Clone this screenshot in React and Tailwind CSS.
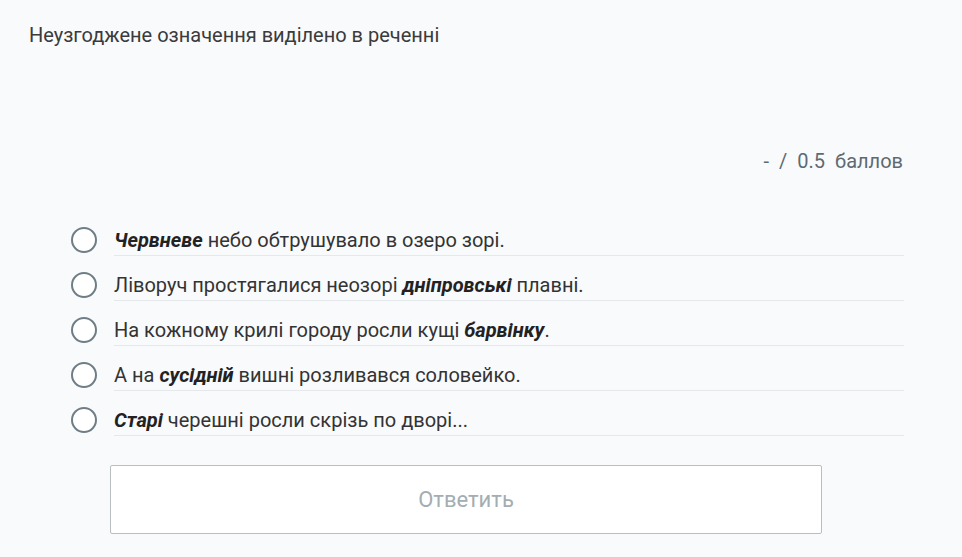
const options = [
    [{ b: "Червневе" }, " небо обтрушувало в озеро зорі."],
    ["Ліворуч простягалися неозорі ", { b: "дніпровські" }, " плавні."],
    ["На кожному крилі городу росли кущі ", { b: "барвінку" }, "."],
    ["А на ", { b: "сусідній" }, " вишні розливався соловейко."],
    [{ b: "Старі" }, " черешні росли скрізь по дворі..."],
];

function Radio() {
    return (
        <span className="mt-[16px] w-[26px] h-[26px] shrink-0 rounded-full border-[2.5px] border-[#6f7e86] bg-white"></span>
    );
}

export default function App() {
    return (
        <div
            className="w-[962px] h-[557px] bg-[#f9fafc] text-[#333] overflow-hidden"
            style={{ fontFamily: "Roboto, 'Noto Sans', sans-serif" }}
        >
            <div className="pt-[22px] pl-[29px] text-[20px] leading-[27px] text-[#3b3b3b]">
                Неузгоджене означення виділено в реченні
            </div>

            <div className="mt-[99px] pr-[59px] flex justify-end gap-[10px] text-[20px] leading-[27px] text-[#5d6a72]">
                <span>-</span>
                <span>/</span>
                <span>0.5</span>
                <span>баллов</span>
            </div>

            <ul className="mt-[36px] pl-[71px] pr-[58px] flex flex-col">
                {options.map((parts, i) => (
                    <li key={i} className="flex items-start gap-[17px]">
                        <Radio />
                        <div className="flex-1 pt-[15px] pb-[1px] border-b border-[#e6e9ec] text-[20px] leading-[28px] text-[#333]">
                            {parts.map((p, j) =>
                                typeof p === "string" ? (
                                    <span key={j}>{p}</span>
                                ) : (
                                    <b key={j} className="italic font-bold text-[#222]">
                                        {p.b}
                                    </b>
                                )
                            )}
                        </div>
                    </li>
                ))}
            </ul>

            <button className="mt-[29px] ml-[110px] w-[712px] h-[69px] bg-white border border-[#b9bec1] rounded-[2px] text-[22px] text-[#a4adb2]">
                Ответить
            </button>
        </div>
    );
}
